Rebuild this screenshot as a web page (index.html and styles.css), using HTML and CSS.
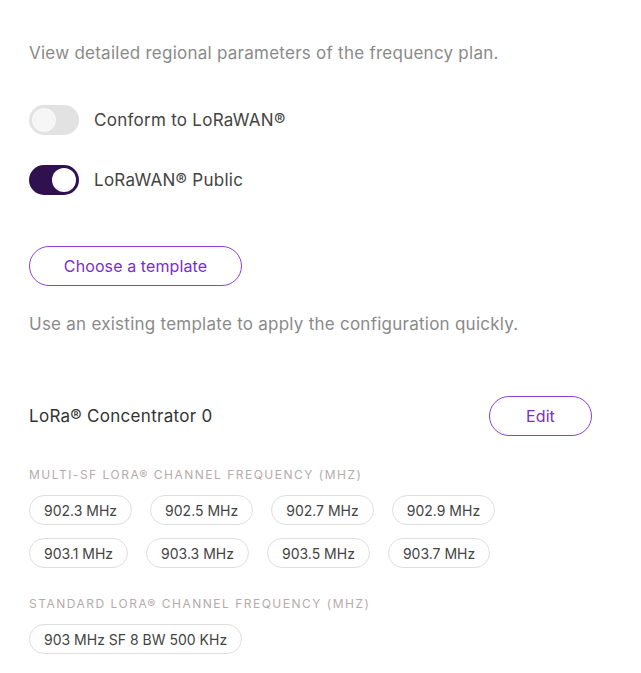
FILE: index.html
```html
<!DOCTYPE html>
<html>
<head>
<meta charset="utf-8">
<link rel="stylesheet" href="styles.css">
</head>
<body>
<div class="page">
  <p class="muted intro">View detailed regional parameters of the frequency plan.</p>
  <div class="toggle-row">
    <span class="toggle"><span class="knob"></span></span>
    <span class="toggle-label">Conform to LoRaWAN®</span>
  </div>
  <div class="toggle-row">
    <span class="toggle on"><span class="knob"></span></span>
    <span class="toggle-label">LoRaWAN® Public</span>
  </div>
  <button class="btn btn-template">Choose a template</button>
  <p class="muted hint">Use an existing template to apply the configuration quickly.</p>
  <div class="concentrator">
    <span class="conc-title">LoRa® Concentrator 0</span>
    <button class="btn btn-edit">Edit</button>
  </div>
  <div class="section-label">MULTI-SF LORA® CHANNEL FREQUENCY (MHZ)</div>
  <div class="chips">
    <span class="chip">902.3 MHz</span>
    <span class="chip">902.5 MHz</span>
    <span class="chip">902.7 MHz</span>
    <span class="chip">902.9 MHz</span>
  </div>
  <div class="chips">
    <span class="chip">903.1 MHz</span>
    <span class="chip">903.3 MHz</span>
    <span class="chip">903.5 MHz</span>
    <span class="chip">903.7 MHz</span>
  </div>
  <div class="section-label second">STANDARD LORA® CHANNEL FREQUENCY (MHZ)</div>
  <div class="chips">
    <span class="chip">903 MHz SF 8 BW 500 KHz</span>
  </div>
</div>
</body>
</html>
```
FILE: styles.css
```css
* { box-sizing: border-box; }
body {
  margin: 0;
  background: #fff;
  font-family: Inter, "Noto Sans", sans-serif;
  color: #444;
}
.page {
  padding: 41px 29px 0 29px;
  width: 621px;
}
.muted {
  color: #8a8a8a;
  font-size: 17px;
  letter-spacing: 0.25px;
  margin: 0;
  line-height: 24px;
}
.intro { margin-bottom: 40px; }
.toggle-row {
  display: flex;
  align-items: center;
  height: 30px;
  margin-bottom: 30px;
}
.toggle {
  width: 50px;
  height: 30px;
  border-radius: 15px;
  background: #e2e2e2;
  position: relative;
  display: inline-block;
  flex: none;
}
.toggle .knob {
  position: absolute;
  top: 3px;
  left: 3px;
  width: 24px;
  height: 24px;
  border-radius: 50%;
  background: #f6f6f6;
}
.toggle.on { background: #2f1150; }
.toggle.on .knob { left: 23px; background: #fff; }
.toggle-label {
  margin-left: 15px;
  font-size: 17px;
  letter-spacing: 0.27px;
  color: #444;
}
.btn {
  font-family: inherit;
  background: #fff;
  border: 1px solid #8f3fd8;
  color: #7a2ec9;
  border-radius: 20px;
  height: 40px;
  font-size: 16px;
  letter-spacing: 0.1px;
  cursor: pointer;
}
.btn-template {
  display: block;
  width: 213px;
  margin-top: 51px;
}
.hint { margin-top: 26px; }
.concentrator {
  display: flex;
  justify-content: space-between;
  align-items: center;
  margin-top: 60px;
}
.conc-title { font-size: 17px; letter-spacing: 0.3px; color: #333; }
.btn-edit { width: 103px; height: 40px; }
.section-label {
  font-size: 12px;
  letter-spacing: 1.5px;
  color: #b5abab;
  margin-top: 31px;
  line-height: 16px;
}
.section-label.second { margin-top: 28px; }
.chips {
  display: flex;
  gap: 18px;
  margin-top: 12px;
}
.chips + .chips { margin-top: 13px; }
.chip {
  display: inline-flex;
  align-items: center;
  height: 30px;
  padding: 0 14px;
  border: 1px solid #dedede;
  border-radius: 15px;
  font-size: 14px;
  color: #444;
}
```
